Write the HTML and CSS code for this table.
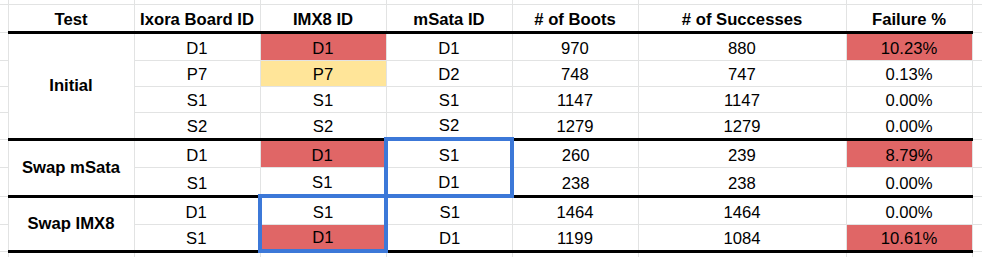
FILE: index.html
```html
<!DOCTYPE html>
<html lang="en">
<head>
<meta charset="utf-8">
<title>Boot test results</title>
<link rel="stylesheet" href="styles.css">
</head>
<body>
<table class="sheet">
  <colgroup>
    <col class="col-edge-l"><col class="col-std"><col class="col-std"><col class="col-std"><col class="col-std"><col class="col-std"><col class="col-wide"><col class="col-std"><col class="col-edge-r">
  </colgroup>
  <tr class="row-top"><td></td><td></td><td></td><td></td><td></td><td></td><td></td><td></td><td></td></tr>
  <tr class="row-head">
    <td></td>
    <th class="tb">Test</th><th class="tb">Ixora Board ID</th><th class="tb">IMX8 ID</th><th class="tb">mSata ID</th><th class="tb"># of Boots</th><th class="tb"># of Successes</th><th class="tb">Failure %</th>
    <td></td>
  </tr>
  <tr class="row-28">
    <td></td>
    <td class="label tb" rowspan="4">Initial</td>
    <td>D1</td><td class="red">D1</td><td>D1</td><td>970</td><td>880</td><td class="red">10.23%</td>
    <td></td>
  </tr>
  <tr class="row-26">
    <td></td>
    <td>P7</td><td class="yel">P7</td><td>D2</td><td>748</td><td>747</td><td>0.13%</td>
    <td></td>
  </tr>
  <tr class="row-26">
    <td></td>
    <td>S1</td><td>S1</td><td>S1</td><td>1147</td><td>1147</td><td>0.00%</td>
    <td></td>
  </tr>
  <tr class="row-27">
    <td></td>
    <td class="tb">S2</td><td class="tb">S2</td><td class="bb">S2</td><td class="tb">1279</td><td class="tb">1279</td><td class="tb">0.00%</td>
    <td></td>
  </tr>
  <tr class="row-28">
    <td></td>
    <td class="label tb" rowspan="2">Swap mSata</td>
    <td>D1</td><td class="red">D1</td><td class="bl br">S1</td><td>260</td><td>239</td><td class="red">8.79%</td>
    <td></td>
  </tr>
  <tr class="row-29">
    <td></td>
    <td class="tb">S1</td><td class="bb">S1</td><td class="bl br bb">D1</td><td class="tb">238</td><td class="tb">238</td><td class="tb">0.00%</td>
    <td></td>
  </tr>
  <tr class="row-28">
    <td></td>
    <td class="label tb" rowspan="2">Swap IMX8</td>
    <td>D1</td><td class="bl br">S1</td><td>S1</td><td>1464</td><td>1464</td><td>0.00%</td>
    <td></td>
  </tr>
  <tr class="row-27">
    <td></td>
    <td class="tb">S1</td><td class="red bl br bb">D1</td><td class="tb">D1</td><td class="tb">1199</td><td class="tb">1084</td><td class="red tb">10.61%</td>
    <td></td>
  </tr>
  <tr class="row-bottom"><td></td><td></td><td></td><td></td><td></td><td></td><td></td><td></td><td></td></tr>
</table>
</body>
</html>
```
FILE: styles.css
```css
html, body {
  margin: 0;
  padding: 0;
  background: #ffffff;
}

body {
  width: 982px;
  height: 258px;
  overflow: hidden;
}

.sheet {
  border-collapse: collapse;
  table-layout: fixed;
  width: 982px;
  font-family: "Liberation Sans", Arial, sans-serif;
  font-size: 16.67px;
  color: #000000;
}

.col-edge-l { width: 8px; }
.col-std { width: 126px; }
.col-wide { width: 208px; }
.col-edge-r { width: 10px; }

.sheet td,
.sheet th {
  border: 1px solid #e2e3e3;
  padding: 0 3px 2px;
  text-align: center;
  vertical-align: bottom;
  white-space: nowrap;
  overflow: hidden;
  line-height: 19px;
}

.sheet th { font-weight: bold; }

.sheet tr > :first-child { border-left: none; }
.sheet tr > :last-child { border-right: none; }
.row-top td { border-top: none; }
.row-bottom td { border-bottom: none; }

.row-top { height: 4px; }
.row-head { height: 28px; }
.row-26 { height: 26px; }
.row-27 { height: 27px; }
.row-28 { height: 28px; }
.row-29 { height: 29px; }
.row-bottom { height: 6px; }

.sheet .label {
  font-weight: bold;
  vertical-align: middle;
  padding-bottom: 0;
}

.sheet .tb { border-bottom: 3px solid #000000; }

.sheet .bl { border-left: 4px solid #3c78d8; }
.sheet .br { border-right: 4px solid #3c78d8; }
.sheet .bb { border-bottom: 4px solid #3c78d8; }

.red { background: #e06666; }
.yel { background: #ffe599; }
```
